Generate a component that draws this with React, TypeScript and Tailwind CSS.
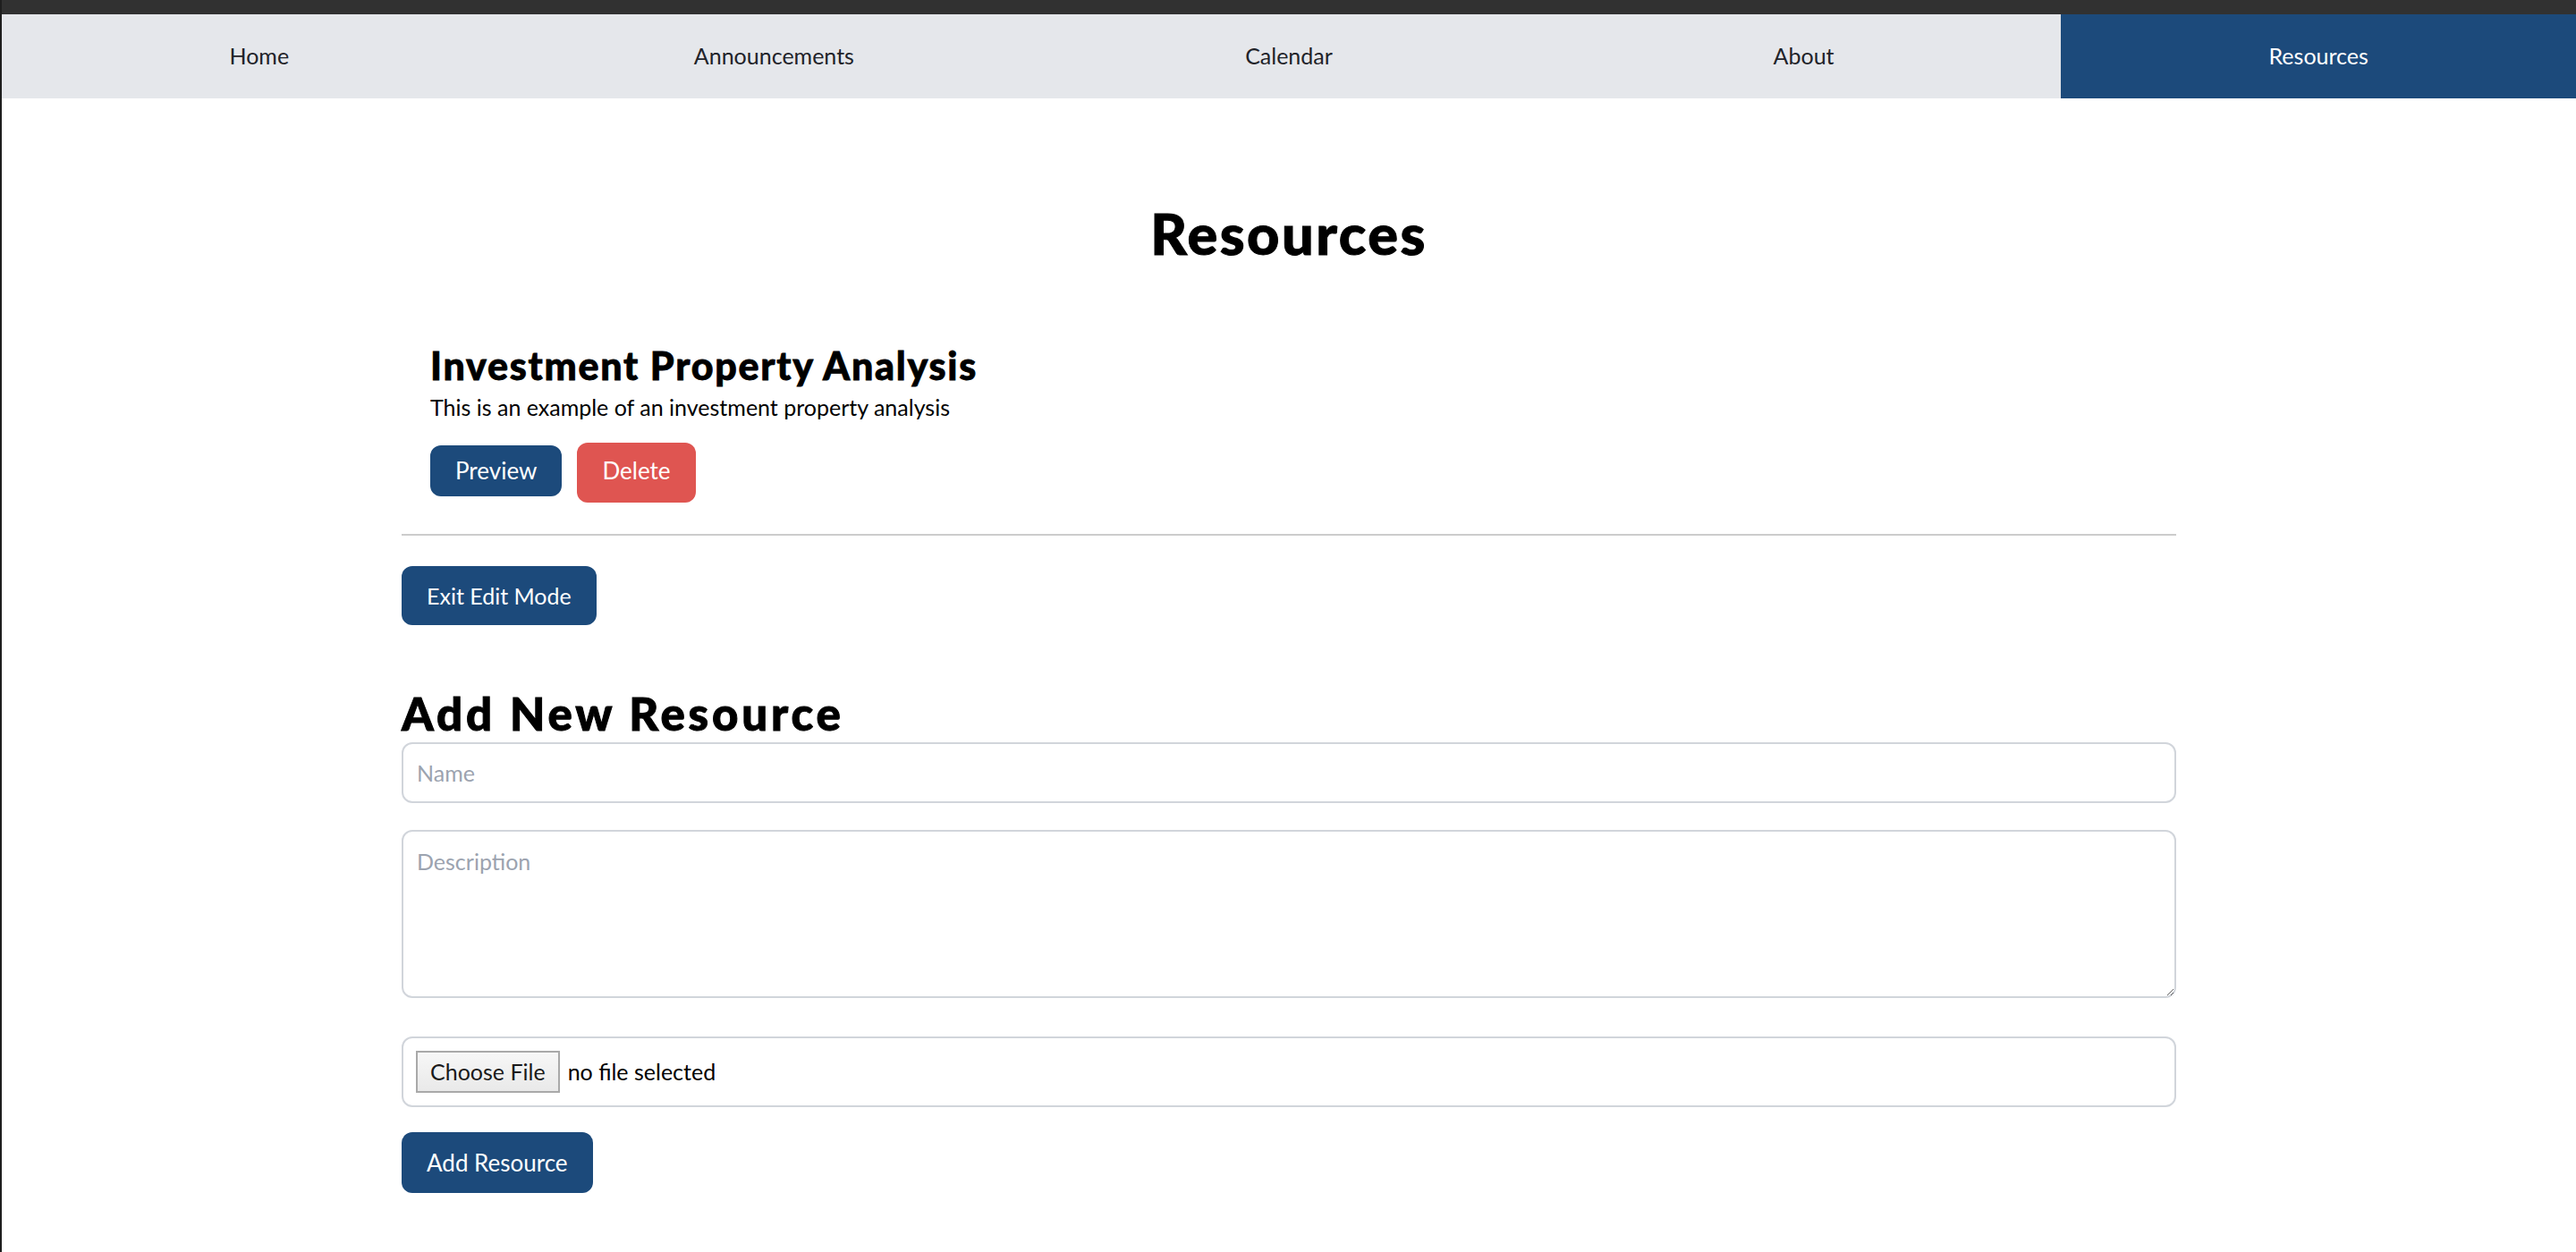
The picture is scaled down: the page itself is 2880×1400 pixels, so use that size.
import { useState } from "react";

type Resource = {
  id: number;
  name: string;
  description: string;
};

const tabs = ["Home", "Announcements", "Calendar", "About", "Resources"];

const initialResources: Resource[] = [
  {
    id: 1,
    name: "Investment Property Analysis",
    description: "This is an example of an investment property analysis",
  },
];

function NavBar({ active }: { active: string }) {
  return (
    <nav className="grid grid-cols-5 bg-[#e5e7eb]">
      {tabs.map((tab) => (
        <a
          key={tab}
          href="#"
          className={
            tab === active
              ? "flex h-[94px] items-center justify-center bg-[#1c4a7b] text-[25px] text-white"
              : "flex h-[94px] items-center justify-center text-[25px] text-[#1f2329]"
          }
        >
          {tab}
        </a>
      ))}
    </nav>
  );
}

function ResourceItem({ resource, onDelete }: { resource: Resource; onDelete: () => void }) {
  return (
    <li className="border-b-2 border-[#cccccc] px-8 pt-8 pb-[35px]">
      <h3 className="text-[43px] leading-[48px] font-black tracking-[0.04em] [-webkit-text-stroke:0.8px_black]">
        {resource.name}
      </h3>
      <p className="mt-[3px] text-[25px] leading-[39px] text-black">{resource.description}</p>
      <div className="mt-[20px] flex items-baseline gap-[17px]">
        <button className="rounded-[12px] bg-[#1c4a7b] px-7 py-[9px] text-[26px] leading-[39px] text-white">
          Preview
        </button>
        <button
          onClick={onDelete}
          className="rounded-[12px] bg-[#df5551] px-7 pt-[12px] pb-[16px] text-[26px] leading-[39px] text-white"
        >
          Delete
        </button>
      </div>
    </li>
  );
}

export default function App() {
  const [resources, setResources] = useState<Resource[]>(initialResources);
  const [name, setName] = useState("");
  const [description, setDescription] = useState("");

  const addResource = () => {
    if (!name.trim()) return;
    setResources([...resources, { id: Date.now(), name, description }]);
    setName("");
    setDescription("");
  };

  return (
    <div className="min-h-screen border-l-2 border-[#1e1e1e] bg-white font-['Lato',sans-serif] text-black">
      <div className="h-4 bg-[#313131]" />
      <NavBar active="Resources" />

      <main className="mx-auto w-[1984px] pb-16">
        <h1 className="mt-[121px] text-center text-[63px] leading-[60px] font-black tracking-[0.04em] [-webkit-text-stroke:1px_black]">
          Resources
        </h1>

        <ul className="mt-[62px]">
          {resources.map((resource) => (
            <ResourceItem
              key={resource.id}
              resource={resource}
              onDelete={() => setResources(resources.filter((r) => r.id !== resource.id))}
            />
          ))}
        </ul>

        <button className="mt-[34px] rounded-[12px] bg-[#1c4a7b] px-7 py-[13px] text-[25px] leading-[40px] text-white">
          Exit Edit Mode
        </button>

        <h2 className="mt-[67px] text-[51px] leading-[64px] font-black tracking-[0.075em] [-webkit-text-stroke:1px_black]">
          Add New Resource
        </h2>

        <form
          className="flex flex-col"
          onSubmit={(e) => {
            e.preventDefault();
            addResource();
          }}
        >
          <input
            value={name}
            onChange={(e) => setName(e.target.value)}
            placeholder="Name"
            className="h-[68px] rounded-[12px] border-2 border-[#d1d5db] px-[15px] text-[25px] outline-none placeholder:text-[#9ca3af]"
          />
          <textarea
            value={description}
            onChange={(e) => setDescription(e.target.value)}
            placeholder="Description"
            className="mt-[30px] h-[188px] rounded-[12px] border-2 border-[#d1d5db] px-[15px] py-[14px] text-[25px] leading-[39px] outline-none placeholder:text-[#9ca3af]"
          />
          <label className="mt-[43px] flex h-[79px] items-center rounded-[12px] border-2 border-[#d1d5db] px-[14px]">
            <input type="file" className="hidden" />
            <span className="flex h-[47px] items-center border-2 border-[#a9a9a9] bg-gradient-to-b from-[#f7f7f7] to-[#e9e9e9] px-[14px] text-[25px] text-[#1a1a1a]">
              Choose File
            </span>
            <span className="ml-[9px] text-[25px] text-black">no file selected</span>
          </label>
          <div className="mt-[28px]">
            <button
              type="submit"
              className="h-[68px] rounded-[12px] bg-[#1c4a7b] px-7 text-[26px] text-white"
            >
              Add Resource
            </button>
          </div>
        </form>
      </main>
    </div>
  );
}
